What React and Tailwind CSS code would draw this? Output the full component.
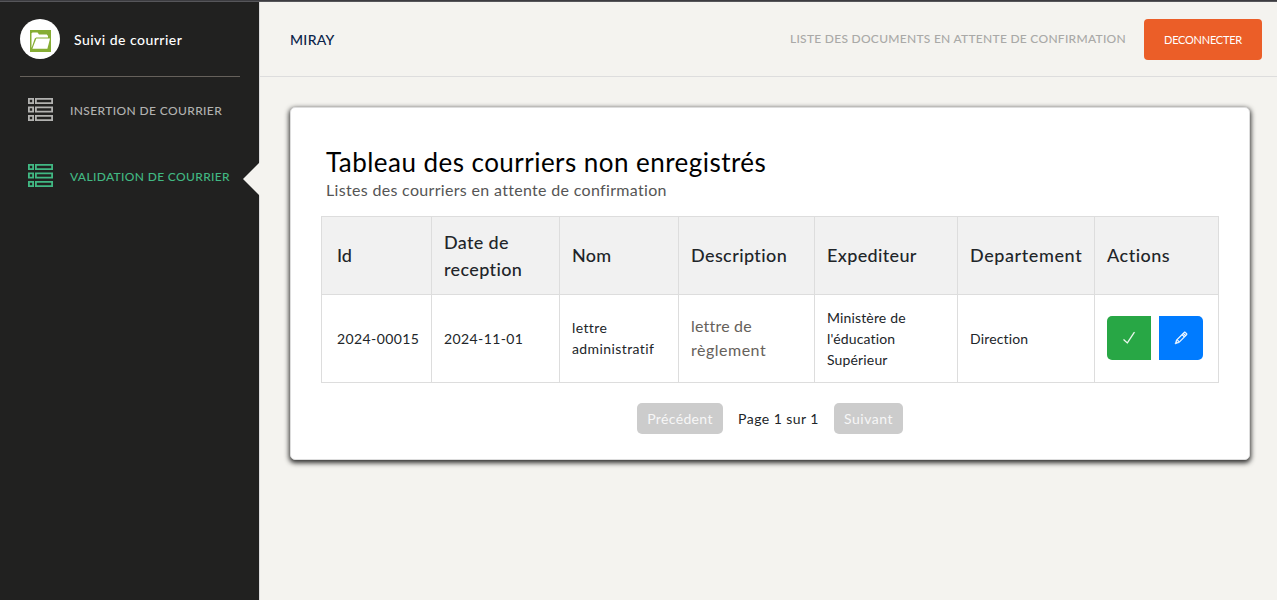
import { TfiCheck, TfiPencil } from "react-icons/tfi";

const columns = [
  { label: "Id", th: "w-[110px] pl-[15px]", text: "" },
  { label: "Date de reception", th: "w-[128px] pl-3 pr-6", text: "tracking-[0.35px]" },
  { label: "Nom", th: "w-[119px] pl-3", text: "tracking-[0.2px]" },
  { label: "Description", th: "w-[136px] pl-3", text: "tracking-[0.4px]" },
  { label: "Expediteur", th: "w-[143px] pl-3", text: "tracking-[0.35px]" },
  { label: "Departement", th: "w-[137px] pl-3", text: "tracking-[0.6px]" },
  { label: "Actions", th: "w-[124px] pl-3", text: "tracking-[0.5px]" },
];

function ListIcon() {
  return (
    <svg width="25" height="24" viewBox="0 0 25 24" fill="none" stroke="currentColor" strokeWidth="1.8" className="mt-[3px] shrink-0">
      <path d="M0.9 0.9H5.1V5.1H0.9ZM7.9 0.9H24.1V5.1H7.9ZM0.9 9.4H5.1V13.6H0.9ZM7.9 9.4H24.1V13.6H7.9ZM0.9 17.9H5.1V22.1H0.9ZM7.9 17.9H24.1V22.1H7.9Z" />
    </svg>
  );
}

function FolderLogo() {
  return (
    <span className="flex size-10 items-center justify-center rounded-full bg-white">
      <svg width="21" height="22" viewBox="0 0 21 22" className="ml-[1px] mt-[3px]">
        <rect width="21" height="22" fill="#86ad34" />
        <path d="M1.5 18V3.2L2.6 2.4H7.6L9 4.6H16.8L18 6V7.4H6.2L4.8 8.6L1.5 18Z" fill="#fff" />
        <path d="M6.3 8.6H20L17.4 18.8H2.4Z" fill="#fff" />
      </svg>
    </span>
  );
}

function Sidebar() {
  return (
    <aside className="relative w-[259px] shrink-0 bg-[#212120] pt-[17px] pr-[19px] pl-5">
      <div className="flex h-[58px] items-start gap-[14px] border-b border-[#66615b]">
        <FolderLogo />
        <span className="pt-[9px] text-[14px] leading-6 font-medium tracking-[0.47px] whitespace-nowrap text-white">Suivi de courrier</span>
      </div>
      <nav className="flex flex-col pt-[18px] text-[12px] font-medium whitespace-nowrap">
        <a className="flex h-[66px] items-start gap-[17px] pl-2 text-[#b2b2b0]">
          <ListIcon />
          <span className="pt-[1px] leading-[30px] tracking-[0.38px]">INSERTION DE COURRIER</span>
        </a>
        <a className="flex h-[66px] items-start gap-[17px] pl-2 text-[#41b883]">
          <ListIcon />
          <span className="pt-[1px] leading-[30px] tracking-[0.35px]">VALIDATION DE COURRIER</span>
        </a>
      </nav>
      <svg className="absolute top-[160px] -right-px z-10" width="17" height="34" viewBox="0 0 17 34">
        <path d="M17 0L0 17L17 34Z" fill="#f4f3ef" />
      </svg>
    </aside>
  );
}

export default function App() {
  return (
    <div className="flex h-[600px] w-full flex-col overflow-hidden bg-[#f4f3ef] font-['Lato','Open_Sans',sans-serif] text-[#212529]">
      <div className="h-[2px] shrink-0 border-b border-[#56565a] bg-[#3c3c40]" />
      <div className="flex min-h-0 flex-1">
        <Sidebar />
        <main className="flex min-w-0 flex-1 flex-col border-l border-[#dddddd]">
          <header className="flex h-[75px] items-start border-b border-[#dddddd] pt-[17px] pr-[15px] pl-[30px] whitespace-nowrap">
            <span className="pt-[9px] text-[14px] leading-6 font-medium tracking-[0.3px] text-[#0b2349]">MIRAY</span>
            <span className="ml-auto pt-2 text-[12px] leading-6 font-medium tracking-[0.28px] text-[#a9a9a7]">
              LISTE DES DOCUMENTS EN ATTENTE DE CONFIRMATION
            </span>
            <button className="ml-[18px] h-[41px] w-[118px] rounded-[4px] bg-[#eb5e28] pt-[2px] text-[11px] tracking-[-0.25px] text-white">DECONNECTER</button>
          </header>
          <section className="mt-[30px] mr-[27px] ml-[30px] h-[353px] rounded-[5px] border border-[#dddddd] bg-white px-[30px] shadow-[0_2px_5px_1px_rgba(0,0,0,0.8)]">
            <h1 className="mt-[36px] pl-[5px] text-[26px] leading-9 tracking-[0.46px] text-black">Tableau des courriers non enregistrés</h1>
            <p className="-mt-[2px] pl-[5px] text-[16px] leading-6 tracking-[0.32px] text-[#555555]">Listes des courriers en attente de confirmation</p>
            <table className="mt-[14px] w-[898px] table-fixed border-collapse text-left text-[14px] leading-[21px]">
              <thead>
                <tr className="h-[78px] bg-[#f1f1f1] text-[18px] leading-[27px]">
                  {columns.map((c) => (
                    <th key={c.label} className={`border border-[#dddddd] font-medium ${c.th}`}>
                      <span className={c.text}>{c.label}</span>
                    </th>
                  ))}
                </tr>
              </thead>
              <tbody>
                <tr className="h-[88px]">
                  <td className="border border-[#dddddd] pl-[15px] tracking-[0.4px]">2024-00015</td>
                  <td className="border border-[#dddddd] pl-3 tracking-[0.4px]">2024-11-01</td>
                  <td className="border border-[#dddddd] pb-[2px] pl-3 tracking-[0.4px]">lettre<br />administratif</td>
                  <td className="border border-[#dddddd] pb-[2px] pl-3 text-[16px] leading-6 text-[#66615b]">
                    <span className="tracking-[0.2px]">lettre de</span><br />
                    <span className="tracking-[0.5px]">règlement</span>
                  </td>
                  <td className="border border-[#dddddd] pl-3 tracking-[0.15px]">Ministère de<br />l'éducation<br />Supérieur</td>
                  <td className="border border-[#dddddd] pl-3 tracking-[0.15px]">Direction</td>
                  <td className="border border-[#dddddd] pb-[2px] pl-3">
                    <div className="flex gap-2 text-white">
                      <button className="flex size-11 items-center justify-center rounded-l-[5px] bg-[#28a745]"><TfiCheck size={14} strokeWidth={0.5} /></button>
                      <button className="flex size-11 items-center justify-center rounded-r-[5px] bg-[#007bff]"><TfiPencil size={14} strokeWidth={0.6} /></button>
                    </div>
                  </td>
                </tr>
              </tbody>
            </table>
            <div className="mt-5 flex items-center justify-center text-[14px]">
              <button className="h-[31px] w-[86px] rounded-[5px] bg-[#cccccc] tracking-[0.35px] text-[#f7f7f7]">Précédent</button>
              <span className="w-[111px] text-center tracking-[0.45px]">Page 1 sur 1</span>
              <button className="h-[31px] w-[69px] rounded-[5px] bg-[#cccccc] tracking-[0.5px] text-[#f7f7f7]">Suivant</button>
            </div>
          </section>
        </main>
      </div>
    </div>
  );
}
